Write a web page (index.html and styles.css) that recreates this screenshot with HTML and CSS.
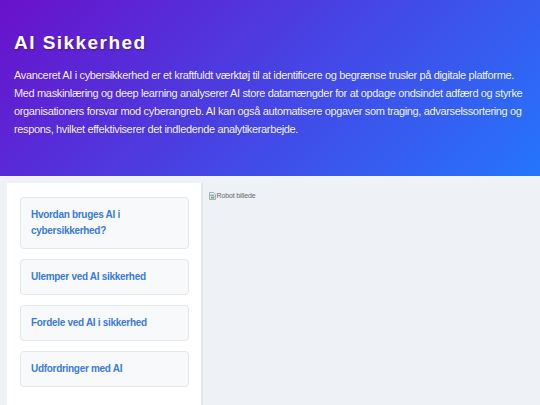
FILE: index.html
```html
<!DOCTYPE html>
<html lang="da">
<head>
<meta charset="utf-8">
<title>AI Sikkerhed</title>
<link rel="stylesheet" href="styles.css">
</head>
<body>
<header class="hero">
  <h1 class="hero-title">AI Sikkerhed</h1>
  <p class="hero-text">Avanceret AI i cybersikkerhed er et kraftfuldt værktøj til at identificere og begrænse trusler på digitale platforme. Med maskinlæring og deep learning analyserer AI store datamængder for at opdage ondsindet adfærd og styrke organisationers forsvar mod cyberangreb. AI kan også automatisere opgaver som traging, advarselssortering og respons, hvilket effektiviserer det indledende analytikerarbejde.</p>
</header>
<main class="layout">
  <nav class="sidebar">
    <a class="topic" href="#">Hvordan bruges AI i cybersikkerhed?</a>
    <a class="topic" href="#">Ulemper ved AI sikkerhed</a>
    <a class="topic" href="#">Fordele ved AI i sikkerhed</a>
    <a class="topic" href="#">Udfordringer med AI</a>
  </nav>
  <section class="viewer">
    <span class="broken-img"><svg class="broken-icon" width="7" height="8" viewBox="0 0 7 8"><path d="M0.5 0.5h4.2l1.8 1.8v5.2h-6z" fill="#f4f4f4" stroke="#9a9a9a" stroke-width="0.8"/><rect x="1.3" y="2.4" width="4" height="2" fill="#7fb4e8"/><path d="M1.3 6.4l1.4-2 1.2 1.2 1.4-1.6v2.4z" fill="#5aa84a"/></svg>Robot billede</span>
  </section>
</main>
</body>
</html>
```

FILE: styles.css
```css
* { box-sizing: border-box; }

html, body {
  margin: 0;
  padding: 0;
}

body {
  background: #eef2f6;
  font-family: "Liberation Sans", Arial, sans-serif;
  color: #333;
}

.hero {
  background: linear-gradient(135deg, #6a11cb 0%, #2575fc 100%);
  color: #fff;
  padding: 31px 14px 38px 14px;
  box-shadow: 0 1px 0 rgba(255, 255, 255, 0.35);
}

.hero-title {
  margin: 0;
  font-size: 19px;
  line-height: 24px;
  font-weight: bold;
  letter-spacing: 1.45px;
  text-shadow: 1px 1px 2px rgba(0, 0, 0, 0.25);
}

.hero-text {
  margin: 11px 0 0 0;
  font-size: 11px;
  letter-spacing: -0.35px;
  line-height: 18px;
  color: rgba(255, 255, 255, 0.95);
}

.layout {
  display: flex;
  padding: 7px 0 0 7px;
  min-height: 229px;
}

.sidebar {
  width: 194px;
  background: #fff;
  padding: 14px 12px 14px 13px;
  display: flex;
  flex-direction: column;
  gap: 10px;
}

.topic {
  display: block;
  background: #f8f9fa;
  border: 1px solid #e4e7ea;
  border-radius: 4px;
  padding: 9px 10px;
  font-size: 10px;
  letter-spacing: -0.3px;
  line-height: 16px;
  font-weight: bold;
  color: #3a7bdc;
  text-decoration: none;
}

.viewer {
  flex: 1;
  border-left: 2px solid #e2e5e9;
  padding: 3px 6px;
}

.broken-img {
  display: inline-flex;
  align-items: center;
  font-size: 7px;
  letter-spacing: -0.15px;
  line-height: 10px;
  color: #666;
}

.broken-icon {
  display: block;
  margin-right: 0.5px;
}
```
